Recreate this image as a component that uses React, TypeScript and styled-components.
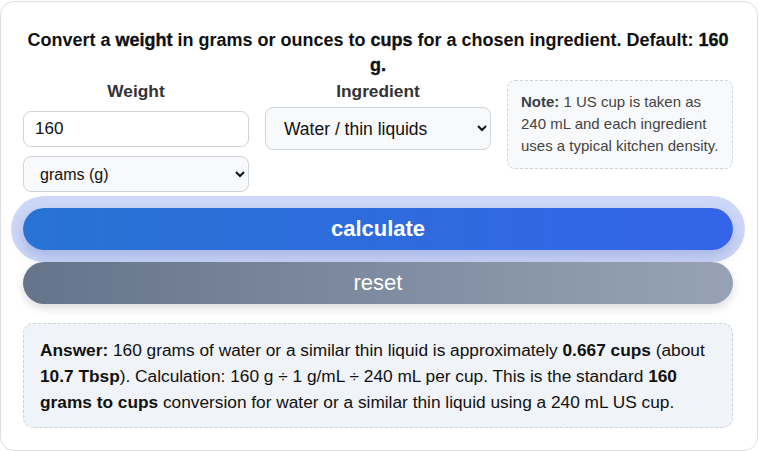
import React, { useState } from 'react';
import styled, { createGlobalStyle } from 'styled-components';

const GlobalStyle = createGlobalStyle`
  body {
    margin: 0;
    background: #ffffff;
    font-family: "Liberation Sans", Arial, sans-serif;
    color: #111;
  }
`;

const Card = styled.section`
  box-sizing: border-box;
  width: 758px;
  margin: 1px 0 0 0;
  padding: 26px 24px 22px 22px;
  border: 1px solid #dcdfe4;
  border-radius: 14px;
  background: #fff;
`;

const Heading = styled.p`
  margin: 0 0 2px;
  padding: 0 2px;
  text-align: center;
  font-size: 18px;
  font-weight: 700;
  line-height: 25px;
  color: #111;

  strong {
    font-weight: 900;
    -webkit-text-stroke: 0.35px #111;
  }
`;

const Grid = styled.div`
  display: grid;
  grid-template-columns: repeat(3, minmax(0, 1fr));
  gap: 16px;
  align-items: start;
`;

const Field = styled.div`
  display: flex;
  flex-direction: column;
  gap: 9px;
`;

const Label = styled.label`
  text-align: center;
  font-size: 17.3px;
  font-weight: 700;
  color: #333;
  line-height: 22px;
`;

const TextInput = styled.input`
  box-sizing: border-box;
  width: 100%;
  height: 36px;
  padding: 0 11px;
  border: 1px solid #cfd4db;
  border-radius: 8px;
  font-family: inherit;
  font-size: 17px;
  color: #111;
  background: #fff;
`;

const Select = styled.select<{ $tall?: boolean }>`
  box-sizing: border-box;
  width: 100%;
  height: ${({ $tall }) => ($tall ? '43px' : '36px')};
  margin-top: ${({ $tall }) => ($tall ? '-4px' : '0')};
  padding: ${({ $tall }) => ($tall ? '0 10px 0 14px' : '0 8px 0 12px')};
  border: 1px solid #cfd4db;
  border-radius: 8px;
  font-family: inherit;
  font-size: ${({ $tall }) => ($tall ? '17.5px' : '16px')};
  color: #111;
  background: #f8f9fa;
`;

const Note = styled.div`
  padding: 10px 13px 11px;
  border: 1px dashed #cfd4db;
  border-radius: 8px;
  background: #f8f9fb;
  font-size: 15px;
  line-height: 22px;
  color: #444;

  strong {
    color: #3a3f47;
  }
`;

const Actions = styled.div`
  display: flex;
  flex-direction: column;
  gap: 12px;
  margin-top: 16px;
`;

const Button = styled.button<{ $primary?: boolean }>`
  height: 42px;
  border: none;
  border-radius: 21px;
  font-family: inherit;
  font-size: 22px;
  font-weight: ${({ $primary }) => ($primary ? 700 : 400)};
  color: #fff;
  cursor: pointer;
  background: ${({ $primary }) =>
    $primary
      ? 'linear-gradient(90deg, #2873d3 0%, #2f6ae0 60%, #3464e8 100%)'
      : 'linear-gradient(90deg, #65748b 0%, #7f8ba0 50%, #97a3b5 100%)'};
  box-shadow: ${({ $primary }) =>
    $primary
      ? '0 0 0 12px rgba(60, 100, 225, 0.26), 0 6px 14px rgba(40, 70, 160, 0.25)'
      : '0 4px 10px rgba(0, 0, 0, 0.14)'};
`;

const Answer = styled.div`
  margin-top: 19px;
  padding: 13px 16px 12px;
  border: 1px dashed #cdd3dc;
  border-radius: 10px;
  background: #f0f3f8;
  font-size: 17.3px;
  line-height: 26px;
  color: #111;
`;

export default function App() {
  const [weight, setWeight] = useState('160');
  const [unit, setUnit] = useState('g');
  const [ingredient, setIngredient] = useState('water');

  return (
    <>
      <GlobalStyle />
      <Card>
        <Heading>
          Convert a <strong>weight</strong> in grams or ounces to <strong>cups</strong> for a chosen
          ingredient. Default: <strong>160 g.</strong>
        </Heading>
        <Grid>
          <Field>
            <Label htmlFor="weight">Weight</Label>
            <TextInput id="weight" value={weight} onChange={e => setWeight(e.target.value)} />
            <Select value={unit} onChange={e => setUnit(e.target.value)}>
              <option value="g">grams (g)</option>
              <option value="oz">ounces (oz)</option>
            </Select>
          </Field>
          <Field>
            <Label htmlFor="ingredient">Ingredient</Label>
            <Select
              $tall
              id="ingredient"
              value={ingredient}
              onChange={e => setIngredient(e.target.value)}
            >
              <option value="water">Water / thin liquids</option>
              <option value="flour">All-purpose flour</option>
              <option value="sugar">Granulated sugar</option>
              <option value="butter">Butter</option>
            </Select>
          </Field>
          <Note>
            <strong>Note:</strong> 1 US cup is taken as 240 mL and each ingredient uses a typical
            kitchen density.
          </Note>
        </Grid>
        <Actions>
          <Button $primary>calculate</Button>
          <Button>reset</Button>
        </Actions>
        <Answer>
          <strong>Answer:</strong> 160 grams of water or a similar thin liquid is approximately{' '}
          <strong>0.667 cups</strong> (about <strong>10.7 Tbsp</strong>). Calculation: 160 g ÷ 1
          g/mL ÷ 240 mL per cup. This is the standard <strong>160 grams to cups</strong> conversion
          for water or a similar thin liquid using a 240 mL US cup.
        </Answer>
      </Card>
    </>
  );
}
